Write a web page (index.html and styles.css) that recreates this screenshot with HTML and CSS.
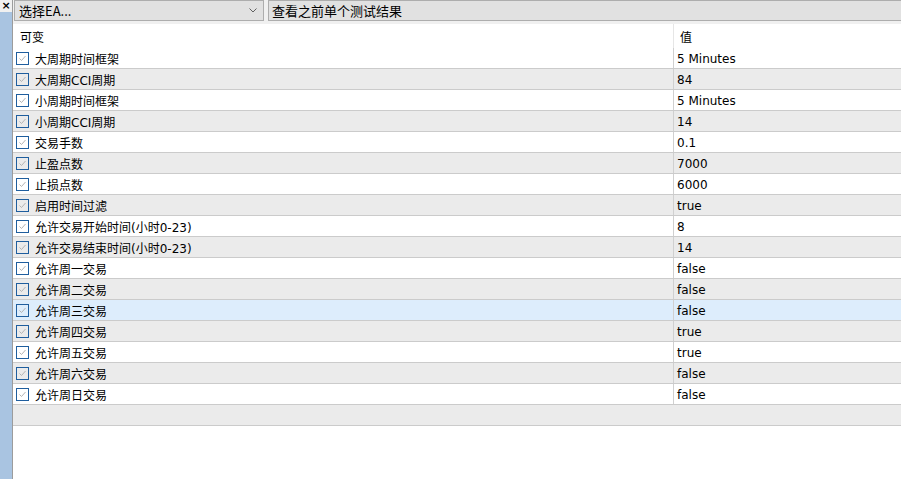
FILE: index.html
```html
<!DOCTYPE html>
<html>
<head>
<meta charset="utf-8">
<link rel="stylesheet" href="styles.css">
</head>
<body>
<div class="app">
  <div class="side">
    <div class="side-close">×</div>
    <div class="side-bar"></div>
  </div>
  <div class="main">
    <div class="toolbar">
      <div class="combo combo-ea">
        <span class="combo-text">选择EA...</span>
        <svg class="chev" width="8" height="5" viewBox="0 0 8 5"><path d="M0.5 0.5 L4 4 L7.5 0.5" fill="none" stroke="#606060" stroke-width="1"/></svg>
      </div>
      <div class="combo combo-res">
        <span class="combo-text">查看之前单个测试结果</span>
      </div>
    </div>
    <div class="grid">
      <div class="row head">
        <div class="c-name">可变</div>
        <div class="c-val">值</div>
      </div>
      <div class="row"><div class="c-name"><svg class="cb" width="13" height="13" viewBox="0 0 13 13"><rect x="0.5" y="0.5" width="12" height="12" fill="none" stroke="#1f5e9e"/><path d="M3.5 6.5 L5.5 8.5 L9.5 4" fill="none" stroke="#b4b4b4" stroke-width="1"/></svg><span>大周期时间框架</span></div><div class="c-val">5 Minutes</div></div>
      <div class="row alt"><div class="c-name"><svg class="cb" width="13" height="13" viewBox="0 0 13 13"><rect x="0.5" y="0.5" width="12" height="12" fill="none" stroke="#1f5e9e"/><path d="M3.5 6.5 L5.5 8.5 L9.5 4" fill="none" stroke="#b4b4b4" stroke-width="1"/></svg><span>大周期CCI周期</span></div><div class="c-val">84</div></div>
      <div class="row"><div class="c-name"><svg class="cb" width="13" height="13" viewBox="0 0 13 13"><rect x="0.5" y="0.5" width="12" height="12" fill="none" stroke="#1f5e9e"/><path d="M3.5 6.5 L5.5 8.5 L9.5 4" fill="none" stroke="#b4b4b4" stroke-width="1"/></svg><span>小周期时间框架</span></div><div class="c-val">5 Minutes</div></div>
      <div class="row alt"><div class="c-name"><svg class="cb" width="13" height="13" viewBox="0 0 13 13"><rect x="0.5" y="0.5" width="12" height="12" fill="none" stroke="#1f5e9e"/><path d="M3.5 6.5 L5.5 8.5 L9.5 4" fill="none" stroke="#b4b4b4" stroke-width="1"/></svg><span>小周期CCI周期</span></div><div class="c-val">14</div></div>
      <div class="row"><div class="c-name"><svg class="cb" width="13" height="13" viewBox="0 0 13 13"><rect x="0.5" y="0.5" width="12" height="12" fill="none" stroke="#1f5e9e"/><path d="M3.5 6.5 L5.5 8.5 L9.5 4" fill="none" stroke="#b4b4b4" stroke-width="1"/></svg><span>交易手数</span></div><div class="c-val">0.1</div></div>
      <div class="row alt"><div class="c-name"><svg class="cb" width="13" height="13" viewBox="0 0 13 13"><rect x="0.5" y="0.5" width="12" height="12" fill="none" stroke="#1f5e9e"/><path d="M3.5 6.5 L5.5 8.5 L9.5 4" fill="none" stroke="#b4b4b4" stroke-width="1"/></svg><span>止盈点数</span></div><div class="c-val">7000</div></div>
      <div class="row"><div class="c-name"><svg class="cb" width="13" height="13" viewBox="0 0 13 13"><rect x="0.5" y="0.5" width="12" height="12" fill="none" stroke="#1f5e9e"/><path d="M3.5 6.5 L5.5 8.5 L9.5 4" fill="none" stroke="#b4b4b4" stroke-width="1"/></svg><span>止损点数</span></div><div class="c-val">6000</div></div>
      <div class="row alt"><div class="c-name"><svg class="cb" width="13" height="13" viewBox="0 0 13 13"><rect x="0.5" y="0.5" width="12" height="12" fill="none" stroke="#1f5e9e"/><path d="M3.5 6.5 L5.5 8.5 L9.5 4" fill="none" stroke="#b4b4b4" stroke-width="1"/></svg><span>启用时间过滤</span></div><div class="c-val">true</div></div>
      <div class="row"><div class="c-name"><svg class="cb" width="13" height="13" viewBox="0 0 13 13"><rect x="0.5" y="0.5" width="12" height="12" fill="none" stroke="#1f5e9e"/><path d="M3.5 6.5 L5.5 8.5 L9.5 4" fill="none" stroke="#b4b4b4" stroke-width="1"/></svg><span>允许交易开始时间(小时0-23)</span></div><div class="c-val">8</div></div>
      <div class="row alt"><div class="c-name"><svg class="cb" width="13" height="13" viewBox="0 0 13 13"><rect x="0.5" y="0.5" width="12" height="12" fill="none" stroke="#1f5e9e"/><path d="M3.5 6.5 L5.5 8.5 L9.5 4" fill="none" stroke="#b4b4b4" stroke-width="1"/></svg><span>允许交易结束时间(小时0-23)</span></div><div class="c-val">14</div></div>
      <div class="row"><div class="c-name"><svg class="cb" width="13" height="13" viewBox="0 0 13 13"><rect x="0.5" y="0.5" width="12" height="12" fill="none" stroke="#1f5e9e"/><path d="M3.5 6.5 L5.5 8.5 L9.5 4" fill="none" stroke="#b4b4b4" stroke-width="1"/></svg><span>允许周一交易</span></div><div class="c-val">false</div></div>
      <div class="row alt"><div class="c-name"><svg class="cb" width="13" height="13" viewBox="0 0 13 13"><rect x="0.5" y="0.5" width="12" height="12" fill="none" stroke="#1f5e9e"/><path d="M3.5 6.5 L5.5 8.5 L9.5 4" fill="none" stroke="#b4b4b4" stroke-width="1"/></svg><span>允许周二交易</span></div><div class="c-val">false</div></div>
      <div class="row hl"><div class="c-name"><svg class="cb" width="13" height="13" viewBox="0 0 13 13"><rect x="0.5" y="0.5" width="12" height="12" fill="none" stroke="#1f5e9e"/><path d="M3.5 6.5 L5.5 8.5 L9.5 4" fill="none" stroke="#b4b4b4" stroke-width="1"/></svg><span>允许周三交易</span></div><div class="c-val">false</div></div>
      <div class="row alt"><div class="c-name"><svg class="cb" width="13" height="13" viewBox="0 0 13 13"><rect x="0.5" y="0.5" width="12" height="12" fill="none" stroke="#1f5e9e"/><path d="M3.5 6.5 L5.5 8.5 L9.5 4" fill="none" stroke="#b4b4b4" stroke-width="1"/></svg><span>允许周四交易</span></div><div class="c-val">true</div></div>
      <div class="row"><div class="c-name"><svg class="cb" width="13" height="13" viewBox="0 0 13 13"><rect x="0.5" y="0.5" width="12" height="12" fill="none" stroke="#1f5e9e"/><path d="M3.5 6.5 L5.5 8.5 L9.5 4" fill="none" stroke="#b4b4b4" stroke-width="1"/></svg><span>允许周五交易</span></div><div class="c-val">true</div></div>
      <div class="row alt"><div class="c-name"><svg class="cb" width="13" height="13" viewBox="0 0 13 13"><rect x="0.5" y="0.5" width="12" height="12" fill="none" stroke="#1f5e9e"/><path d="M3.5 6.5 L5.5 8.5 L9.5 4" fill="none" stroke="#b4b4b4" stroke-width="1"/></svg><span>允许周六交易</span></div><div class="c-val">false</div></div>
      <div class="row"><div class="c-name"><svg class="cb" width="13" height="13" viewBox="0 0 13 13"><rect x="0.5" y="0.5" width="12" height="12" fill="none" stroke="#1f5e9e"/><path d="M3.5 6.5 L5.5 8.5 L9.5 4" fill="none" stroke="#b4b4b4" stroke-width="1"/></svg><span>允许周日交易</span></div><div class="c-val">false</div></div>
      <div class="row alt empty"></div>
    </div>
  </div>
</div>
</body>
</html>
```

FILE: styles.css
```css
html, body {
  margin: 0;
  padding: 0;
  width: 901px;
  height: 479px;
  overflow: hidden;
  background: #ffffff;
}

.app {
  display: flex;
  height: 479px;
  font-family: "DejaVu Sans", "Noto Sans CJK SC", sans-serif;
  font-size: 12px;
  color: #000;
}

.side {
  width: 12px;
  display: flex;
  flex-direction: column;
  border-right: 1px solid #9c9c9c;
  flex: none;
}

.side-close {
  height: 12px;
  background: #f0f0f0;
  font-family: "DejaVu Sans", sans-serif;
  font-weight: bold;
  font-size: 11px;
  line-height: 12px;
  text-align: center;
  color: #000;
}

.side-bar {
  flex: 1;
  background: #a9c4e1;
}

.main {
  flex: 1;
  display: flex;
  flex-direction: column;
  min-width: 0;
}

.toolbar {
  display: flex;
  gap: 4px;
  height: 21px;
  padding: 0 0 3px 1px;
  background: #f0f0f0;
  margin-right: -3px;
}

.combo {
  box-sizing: border-box;
  height: 21px;
  border: 1px solid #adadad;
  background: #e1e1e1;
  display: flex;
  align-items: center;
  font-family: "Noto Sans CJK SC", sans-serif;
  font-size: 13px;
  color: #000;
}

.combo-ea {
  width: 250px;
  padding-left: 4px;
  padding-right: 6px;
  justify-content: space-between;
}

.combo-res {
  flex: 1;
  padding-left: 3px;
}

.combo-text {
  line-height: 19px;
}

.chev {
  display: block;
}

.grid {
  flex: 1;
  display: flex;
  flex-direction: column;
  background: #fff;
}

.row {
  display: grid;
  grid-template-columns: 660px 1fr;
  height: 20px;
  border-bottom: 1px solid #cbcbcb;
  background: #fff;
}

.row.alt {
  background: #ebebeb;
}

.row.hl {
  background: #ddedfc;
}

.row.head {
  height: 24px;
  border-bottom: none;
  background: #fff;
}

.row.empty {
  display: block;
}

.c-name {
  display: flex;
  align-items: center;
  gap: 6px;
  padding-left: 3px;
  white-space: nowrap;
}

.c-val {
  display: flex;
  align-items: center;
  border-left: 1px solid #d0d0d0;
  padding-left: 3px;
  padding-top: 1px;
  white-space: nowrap;
}

.head .c-name {
  padding-left: 7px;
}

.head .c-val {
  padding-left: 6px;
  padding-top: 0;
  border-left-color: #e6e6e6;
}

.cb {
  display: block;
  flex: none;
}
```
